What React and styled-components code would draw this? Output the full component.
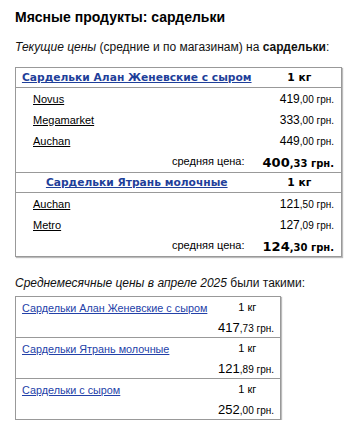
import React from 'react';
import styled, { createGlobalStyle } from 'styled-components';

const GlobalStyle = createGlobalStyle`
  body {
    margin: 0;
    background: #fff;
    font-family: "Liberation Sans", Arial, sans-serif;
    color: #000;
  }
`;

const current = [
  {
    name: 'Сардельки Алан Женевские с сыром',
    unit: '1 кг',
    shops: [
      { shop: 'Novus', price: ['419', '00'] },
      { shop: 'Megamarket', price: ['333', '00'] },
      { shop: 'Auchan', price: ['449', '00'] },
    ],
    avg: ['400', '33'],
  },
  {
    name: 'Сардельки Ятрань молочные',
    unit: '1 кг',
    shops: [
      { shop: 'Auchan', price: ['121', '50'] },
      { shop: 'Metro', price: ['127', '09'] },
    ],
    avg: ['124', '30'],
  },
];

const monthly = [
  { name: 'Сардельки Алан Женевские с сыром', unit: '1 кг', price: ['417', '73'] },
  { name: 'Сардельки Ятрань молочные', unit: '1 кг', price: ['121', '89'] },
  { name: 'Сардельки с сыром', unit: '1 кг', price: ['252', '00'] },
];

const Page = styled.div`
  padding: 8px 15px 0;
`;

const Title = styled.h1`
  margin: 0;
  font-size: 14px;
  line-height: 19px;
  font-weight: bold;
`;

const Lead = styled.p`
  margin: ${(p) => p.$top}px 0 0;
  font-size: 12px;
  line-height: 16px;
  color: #111;
`;

const Table = styled.table`
  margin-top: ${(p) => p.$top}px;
  width: ${(p) => p.$width}px;
  border-collapse: collapse;
  border: 1px solid #999;
  box-shadow: 1px 1px 1px #bbb;
  table-layout: fixed;
`;

const HeadCell = styled.td`
  height: 19px;
  padding: 0;
  border-top: 1px solid #999;
  border-bottom: 1px solid #999;
  font-family: "DejaVu Sans", Verdana, sans-serif;
  font-size: 10.7px;
  font-weight: bold;
  text-align: center;
  vertical-align: middle;
  white-space: nowrap;
`;

const HeadLink = styled.a`
  color: #1f3f9a;
  text-decoration: underline;
`;

const ShopCell = styled.td`
  height: 19px;
  padding: 0 0 2px 17px;
  vertical-align: middle;
`;

const ShopLink = styled.a`
  color: #000;
  font-size: 11px;
  text-decoration: underline;
`;

const PriceCell = styled.td`
  padding: 0 ${(p) => p.$right}px ${(p) => p.$pb}px 0;
  height: ${(p) => p.$h}px;
  text-align: right;
  white-space: nowrap;
  vertical-align: middle;
`;

const Big = styled.span`
  font-size: ${(p) => p.$size}px;
`;

const Small = styled.span`
  font-size: ${(p) => p.$size}px;
`;

const AvgLabel = styled.td`
  height: 20px;
  padding: 0 13px 1px 0;
  text-align: right;
  font-size: 11px;
  vertical-align: middle;
`;

const AvgValue = styled.td`
  padding: 0 7px 1px 0;
  text-align: right;
  white-space: nowrap;
  font-family: "DejaVu Sans", Verdana, sans-serif;
  font-weight: bold;
  vertical-align: middle;
`;

const NameCell = styled.td`
  height: 20px;
  padding: 0 0 0 6px;
  vertical-align: middle;
  border-top: 1px solid #999;
`;

const NameLink = styled.a`
  color: #2341a8;
  font-size: 10.8px;
  text-decoration: underline;
  white-space: nowrap;
`;

const UnitCell = styled.td`
  padding: 0;
  text-align: center;
  font-size: 11px;
  vertical-align: middle;
  border-top: 1px solid #999;
`;

function Price({ value, big, small }) {
  return (
    <>
      <Big $size={big}>{value[0]}</Big>
      <Small $size={small}>,{value[1]} грн.</Small>
    </>
  );
}

export default function App() {
  return (
    <Page>
      <GlobalStyle />
      <Title>Мясные продукты: сардельки</Title>
      <Lead $top={12}>
        <i>Текущие цены</i> (средние и по магазинам) на <b>сардельки</b>:
      </Lead>
      <Table $top={12} $width={327}>
        <colgroup>
          <col style={{ width: 242 }} />
          <col />
        </colgroup>
        {current.map((item) => (
          <tbody key={item.name}>
            <tr>
              <HeadCell>
                <HeadLink href="#">{item.name}</HeadLink>
              </HeadCell>
              <HeadCell>{item.unit}</HeadCell>
            </tr>
            {item.shops.map((s) => (
              <tr key={s.shop}>
                <ShopCell>
                  <ShopLink href="#">{s.shop}</ShopLink>
                </ShopCell>
                <PriceCell $right={7} $h={19} $pb={2}>
                  <Price value={s.price} big={12} small={10} />
                </PriceCell>
              </tr>
            ))}
            <tr>
              <AvgLabel>средняя цена:</AvgLabel>
              <AvgValue>
                <Price value={item.avg} big={13} small={10} />
              </AvgValue>
            </tr>
          </tbody>
        ))}
      </Table>
      <Lead $top={18}>
        <i>Среднемесячные цены в апреле 2025</i> были такими:
      </Lead>
      <Table $top={5} $width={266}>
        <colgroup>
          <col style={{ width: 199 }} />
          <col />
        </colgroup>
        {monthly.map((item) => (
          <tbody key={item.name}>
            <tr>
              <NameCell>
                <NameLink href="#">{item.name}</NameLink>
              </NameCell>
              <UnitCell>{item.unit}</UnitCell>
            </tr>
            <tr>
              <PriceCell colSpan={2} $right={6} $h={20} $pb={0}>
                <Price value={item.price} big={13} small={10} />
              </PriceCell>
            </tr>
          </tbody>
        ))}
      </Table>
    </Page>
  );
}
